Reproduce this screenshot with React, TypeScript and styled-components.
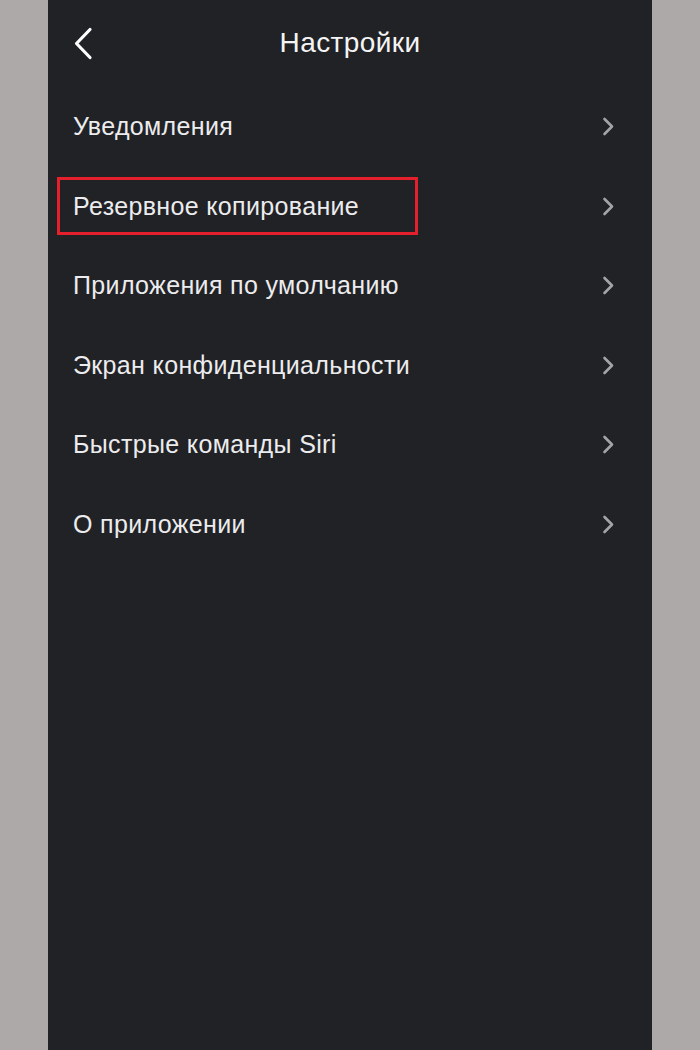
import { FC } from "react";
import styled, { createGlobalStyle } from "styled-components";

const GlobalStyle = createGlobalStyle`
  html, body {
    margin: 0;
    padding: 0;
    background: #ada9a9;
  }
  body {
    font-family: "Liberation Sans", Arial, sans-serif;
  }
`;

const Page = styled.div`
  display: flex;
  justify-content: center;
  min-height: 1050px;
  background: #ada9a9;
`;

const Panel = styled.div`
  width: 604px;
  min-height: 1050px;
  background: #212226;
  display: flex;
  flex-direction: column;
`;

const Header = styled.div`
  position: relative;
  height: 86px;
  display: flex;
  align-items: center;
  justify-content: center;
`;

const BackButton = styled.button`
  position: absolute;
  left: 22px;
  top: 25px;
  width: 26px;
  height: 36px;
  padding: 0;
  border: none;
  background: none;
  display: flex;
  align-items: center;
  justify-content: center;
  cursor: pointer;
`;

const Title = styled.h1`
  margin: 0;
  font-size: 28px;
  font-weight: 400;
  color: #f4f4f5;
  letter-spacing: 0.4px;
`;

const List = styled.div`
  display: flex;
  flex-direction: column;
  padding: 1px 0 0;
`;

const Row = styled.div<{ $highlight?: boolean }>`
  position: relative;
  height: 79.5px;
  display: flex;
  align-items: center;
  justify-content: space-between;
  padding: 0 37px 0 25px;
  cursor: pointer;

  ${({ $highlight }) =>
    $highlight &&
    `
    &::after {
      content: "";
      position: absolute;
      left: 9px;
      top: 50%;
      width: 361px;
      height: 58px;
      transform: translateY(-50%);
      border: 3px solid #e3202b;
      box-sizing: border-box;
    }
  `}
`;

const Label = styled.span`
  font-size: 25px;
  color: #ececee;
  letter-spacing: 0.35px;
`;

const BackIcon = () => (
  <svg width="20" height="33" viewBox="0 0 20 33" fill="none">
    <path
      d="M17 2.5 L3.5 16.5 L17 30.5"
      stroke="#ffffff"
      strokeWidth="3.2"
      strokeLinecap="round"
      strokeLinejoin="round"
    />
  </svg>
);

const ChevronIcon = () => (
  <svg width="13" height="19" viewBox="0 0 13 19" fill="none">
    <path
      d="M2.5 2 L10 9.5 L2.5 17"
      stroke="#a3a3a8"
      strokeWidth="2.6"
      strokeLinecap="round"
      strokeLinejoin="round"
    />
  </svg>
);

const items = [
  "Уведомления",
  "Резервное копирование",
  "Приложения по умолчанию",
  "Экран конфиденциальности",
  "Быстрые команды Siri",
  "О приложении",
];

const SettingsRow: FC<{ title: string; highlight?: boolean }> = ({
  title,
  highlight,
}) => (
  <Row $highlight={highlight}>
    <Label>{title}</Label>
    <ChevronIcon />
  </Row>
);

export default function App() {
  return (
    <>
      <GlobalStyle />
      <Page>
        <Panel>
          <Header>
            <BackButton aria-label="Назад">
              <BackIcon />
            </BackButton>
            <Title>Настройки</Title>
          </Header>
          <List>
            {items.map((title, i) => (
              <SettingsRow key={title} title={title} highlight={i === 1} />
            ))}
          </List>
        </Panel>
      </Page>
    </>
  );
}
